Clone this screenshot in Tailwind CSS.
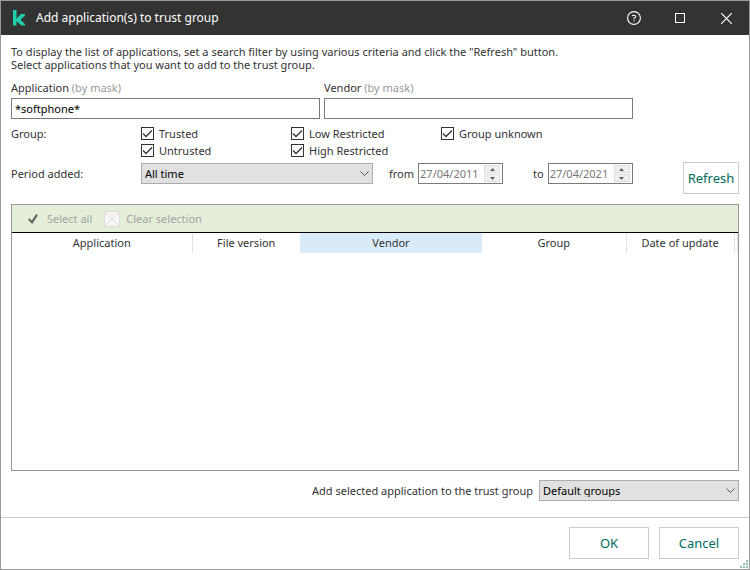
<!DOCTYPE html>
<html lang="en">
<head>
    <meta charset="UTF-8">
    <meta name="viewport" content="width=device-width, initial-scale=1.0">
    <title>Add application(s) to trust group</title>
    <script src="https://cdn.jsdelivr.net/npm/@tailwindcss/browser@4"></script>
</head>
<body class="font-['Noto_Sans','Open_Sans',sans-serif] text-[11px] leading-[13px] text-[#333]">
    <div class="flex min-h-screen flex-col border border-[#999] bg-white">
        <!-- Title bar -->
        <header class="flex h-[34px] items-center bg-[#333] pl-3 text-white">
            <svg class="h-4 w-3" viewBox="0 0 12 16" fill="#1dcdab" aria-hidden="true">
                <path d="M0 0H3.5V15.5H0Z" />
                <path d="M3 9L8 4H12V5.5L7.5 9.7L12 14V15.5H8.5L4 11.5H3Z" />
            </svg>
            <h1 class="ml-[11px] flex-1 text-xs">Add application(s) to trust group</h1>
            <button type="button" class="flex h-full w-[46px] items-center justify-center" aria-label="Help">
                <svg class="size-[14px]" viewBox="0 0 14 14" fill="none" stroke="#fff" stroke-width="1.1">
                    <circle cx="7" cy="7" r="6.4" />
                    <path d="M5.2 5.2Q5.4 4.2 7 4.2Q8.7 4.2 8.7 5.6Q8.7 6.4 7.7 6.9Q7 7.3 7 8.2M7 9.2V10.3" />
                </svg>
            </button>
            <button type="button" class="flex h-full w-[46px] items-center justify-center" aria-label="Maximize">
                <span class="size-[10px] border border-white"></span>
            </button>
            <button type="button" class="flex h-full w-[46px] items-center justify-center" aria-label="Close">
                <svg class="size-[11px]" viewBox="0 0 11 11" stroke="#fff" stroke-width="1.2"><path d="M0 0L11 11M11 0L0 11" /></svg>
            </button>
        </header>

        <main class="flex flex-1 flex-col px-[10px] pt-[10px]">
            <p>To display the list of applications, set a search filter by using various criteria and click the "Refresh" button.<br>Select applications that you want to add to the trust group.</p>

            <!-- Name filters -->
            <div class="mt-[10px] grid grid-cols-2 gap-1 pr-[106px]">
                <div class="flex flex-col gap-1">
                    <label for="application">Application <span class="text-[#999]">(by mask)</span></label>
                    <input id="application" type="text" value="*softphone*" class="h-[21px] w-full border border-[#7a7a7a] px-[3px] pb-px text-black">
                </div>
                <div class="flex flex-col gap-1">
                    <label for="vendor">Vendor <span class="text-[#999]">(by mask)</span></label>
                    <input id="vendor" type="text" class="h-[21px] w-full border border-[#7a7a7a] px-[3px] pb-px text-black">
                </div>
            </div>

            <!-- Group filters -->
            <div class="mt-2 flex" role="group" aria-labelledby="groupLabel">
                <span id="groupLabel" class="w-[130px]">Group:</span>
                <div class="grid grid-cols-[150px_150px_auto] gap-y-1">
                    <label class="flex gap-[5px]"><input type="checkbox" checked class="check">Trusted</label>
                    <label class="flex gap-[5px]"><input type="checkbox" checked class="check">Low Restricted</label>
                    <label class="flex gap-[5px]"><input type="checkbox" checked class="check">Group unknown</label>
                    <label class="flex gap-[5px]"><input type="checkbox" checked class="check">Untrusted</label>
                    <label class="flex gap-[5px]"><input type="checkbox" checked class="check">High Restricted</label>
                </div>
            </div>

            <!-- Period -->
            <div class="mt-[5px] flex items-start">
                <div class="flex flex-1 items-center pt-px">
                    <label for="period" class="w-[130px]">Period added:</label>
                    <div class="grid w-[232px]">
                        <select id="period" class="col-start-1 row-start-1 h-[21px] appearance-none border border-[#adadad] bg-[#e1e1e1] px-[3px] text-black">
                            <option>All time</option>
                        </select>
                        <svg class="pointer-events-none col-start-1 row-start-1 mr-1 h-[5px] w-[9px] self-center justify-self-end" viewBox="0 0 9 5" fill="none" stroke="#555"><path d="M0.5 0.5L4.5 4.5L8.5 0.5" /></svg>
                    </div>
                    <label for="from" class="mr-1 ml-4">from</label>
                    <div class="flex h-[21px] w-[85px] border border-[#7a7a7a]">
                        <input id="from" type="text" value="27/04/2011" class="min-w-0 flex-1 pl-px text-[#777]">
                        <div class="flex w-[18px] flex-col gap-px py-px pr-[2px]">
                            <button type="button" aria-label="Later start date" class="flex flex-1 items-center justify-center border border-[#ddd] bg-[#f0f0f0]"><svg class="h-[3px] w-[5px]" viewBox="0 0 5 3" fill="#606060"><path d="M0 3L2.5 0L5 3Z" /></svg></button>
                            <button type="button" aria-label="Earlier start date" class="flex flex-1 items-center justify-center border border-[#ddd] bg-[#f0f0f0]"><svg class="h-[3px] w-[5px]" viewBox="0 0 5 3" fill="#606060"><path d="M0 0L2.5 3L5 0Z" /></svg></button>
                        </div>
                    </div>
                    <label for="to" class="mr-1 ml-[30px]">to</label>
                    <div class="flex h-[21px] w-[85px] border border-[#7a7a7a]">
                        <input id="to" type="text" value="27/04/2021" class="min-w-0 flex-1 pl-px text-[#777]">
                        <div class="flex w-[18px] flex-col gap-px py-px pr-[2px]">
                            <button type="button" aria-label="Later end date" class="flex flex-1 items-center justify-center border border-[#ddd] bg-[#f0f0f0]"><svg class="h-[3px] w-[5px]" viewBox="0 0 5 3" fill="#606060"><path d="M0 3L2.5 0L5 3Z" /></svg></button>
                            <button type="button" aria-label="Earlier end date" class="flex flex-1 items-center justify-center border border-[#ddd] bg-[#f0f0f0]"><svg class="h-[3px] w-[5px]" viewBox="0 0 5 3" fill="#606060"><path d="M0 0L2.5 3L5 0Z" /></svg></button>
                        </div>
                    </div>
                </div>
                <button type="button" class="h-8 w-14 border border-[#ccc] text-[13px] text-[#006d5c]">Refresh</button>
            </div>

            <!-- Application list -->
            <section class="mt-[10px] flex-1 border border-[#999]">
                <div class="flex h-7 items-center gap-3 border-b border-black bg-[#e4eed9] pl-4 text-[#a3a3a3]">
                    <button type="button" class="flex items-center gap-[9px]">
                        <svg class="h-[10px] w-[10px]" viewBox="0 0 10 10" fill="none" stroke="#666" stroke-width="2.2"><path d="M0.7 5L4 8.3L9 0.7" /></svg>
                        Select all
                    </button>
                    <button type="button" class="flex items-center gap-[6px]">
                        <svg class="size-4" viewBox="0 0 16 16" fill="none"><rect x="0.5" y="0.5" width="15" height="15" fill="#f7f7f5" stroke="#dcdcda" /><path d="M1 1L15 15M15 1L1 15" stroke="#dededc" /></svg>
                        Clear selection
                    </button>
                </div>
                <table class="w-full table-fixed">
                    <colgroup>
                        <col class="w-[180px]"><col class="w-[108px]"><col class="w-[182px]"><col class="w-[144px]"><col class="w-[108px]"><col>
                    </colgroup>
                    <thead>
                        <tr class="h-5">
                            <th class="border-r border-[#e3e3e3] pb-px font-normal">Application</th>
                            <th class="pb-px font-normal">File version</th>
                            <th class="bg-[#d9ebf9] pb-px font-normal">Vendor</th>
                            <th class="border-r border-[#e3e3e3] pb-px font-normal">Group</th>
                            <th class="border-r border-[#e3e3e3] pb-px font-normal">Date of update</th>
                            <th class="border-r border-[#e3e3e3]"></th>
                        </tr>
                    </thead>
                    <tbody></tbody>
                </table>
            </section>

            <div class="my-[9px] flex items-center justify-end gap-[6px] pb-[7px]">
                <label for="trustGroup">Add selected application to the trust group</label>
                <div class="grid w-[200px]">
                    <select id="trustGroup" class="col-start-1 row-start-1 h-[21px] appearance-none border border-[#adadad] bg-[#e1e1e1] px-[3px] text-black">
                        <option>Default groups</option>
                    </select>
                    <svg class="pointer-events-none col-start-1 row-start-1 mr-1 h-[5px] w-[9px] self-center justify-self-end" viewBox="0 0 9 5" fill="none" stroke="#555"><path d="M0.5 0.5L4.5 4.5L8.5 0.5" /></svg>
                </div>
            </div>
        </main>

        <!-- Footer -->
        <footer class="relative flex justify-end gap-[10px] border-t border-[#ccc] px-[10px] pt-[9px] pb-[10px] text-[13px] text-[#006d5c]">
            <button type="button" class="h-8 w-20 border border-[#ccc]">OK</button>
            <button type="button" class="h-8 w-20 border border-[#ccc]">Cancel</button>
            <svg class="absolute right-px bottom-px size-2" viewBox="0 0 8 8" fill="#8fc3ae" aria-hidden="true"><path d="M6 0h2v2h-2zM3 3h2v2h-2zM6 3h2v2h-2zM0 6h2v2h-2zM3 6h2v2h-2zM6 6h2v2h-2z" /></svg>
        </footer>
    </div>

    <style>
        .check {
            appearance: none;
            width: 13px;
            height: 13px;
            border: 1px solid #333;
            background: #fff;
        }
        .check:checked {
            background: url("data:image/svg+xml,%3Csvg xmlns='http://www.w3.org/2000/svg' viewBox='0 0 11 11' fill='none' stroke='%23333' stroke-width='1.3'%3E%3Cpath d='M1 5.5L4 8.5L10 2.5'/%3E%3C/svg%3E") center / 11px 11px no-repeat;
        }
    </style>
</body>
</html>
